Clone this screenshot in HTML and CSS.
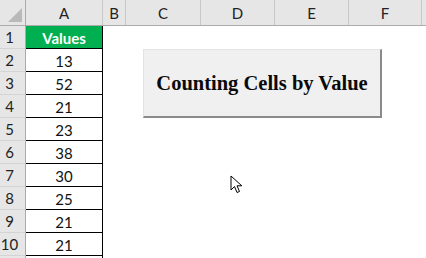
FILE: index.html
```html
<html>
<head>
    <title>Counting Cells by Value</title>
    <link rel="stylesheet" href="styles.css">
</head>
<body>
<div class="sheet">
    <div class="col-heads">
        <div class="corner"><span class="corner-tri"></span></div>
        <div class="col-head a">A</div>
        <div class="col-head b">B</div>
        <div class="col-head c">C</div>
        <div class="col-head d">D</div>
        <div class="col-head e">E</div>
        <div class="col-head f">F</div>
        <div class="col-head g"></div>
    </div>
    <div class="rows">
        <div class="row-head">1</div><div class="cell title">Values</div><div class="rest"></div>
        <div class="row-head">2</div><div class="cell">13</div><div class="rest"></div>
        <div class="row-head">3</div><div class="cell">52</div><div class="rest"></div>
        <div class="row-head">4</div><div class="cell">21</div><div class="rest"></div>
        <div class="row-head">5</div><div class="cell">23</div><div class="rest"></div>
        <div class="row-head">6</div><div class="cell">38</div><div class="rest"></div>
        <div class="row-head">7</div><div class="cell">30</div><div class="rest"></div>
        <div class="row-head">8</div><div class="cell">25</div><div class="rest"></div>
        <div class="row-head">9</div><div class="cell">21</div><div class="rest"></div>
        <div class="row-head">10</div><div class="cell">21</div><div class="rest"></div>
        <div class="row-head"></div><div class="cell"></div><div class="rest"></div>
    </div>

    <button class="macro-btn">Counting Cells by Value</button>

    <svg class="cursor" width="13" height="20" viewBox="0 0 13 20">
        <path d="M1 1 L1 15 L4.5 11.5 L7 17.5 L9.5 16.5 L7 10.8 L11.8 10.8 Z" fill="#fff" stroke="#000" stroke-width="1" stroke-linejoin="miter"/>
    </svg>
</div>
</body>
</html>
```

FILE: styles.css
```css
body {
    margin: 0;
    background: #fff;
    font-family: Lato, "Open Sans", sans-serif;
    overflow: hidden;
}

.sheet {
    position: relative;
    width: 426px;
    height: 258px;
    overflow: hidden;
}

/* column headers */
.col-heads {
    display: grid;
    grid-template-columns: 26px 77px 23px 75px 74px 74px 73px 1fr;
    height: 26px;
    background: #e6e6e6;
    border-bottom: 1px solid #ababab;
    box-sizing: border-box;
}

.corner {
    position: relative;
    border-right: 1px solid #ababab;
}

.corner-tri {
    position: absolute;
    right: 3px;
    bottom: 3px;
    width: 0;
    height: 0;
    border-left: 14px solid transparent;
    border-bottom: 14px solid #b9b9b9;
}

.col-head {
    border-right: 1px solid #c8c8c8;
    font-size: 15px;
    color: #222;
    display: flex;
    align-items: center;
    justify-content: center;
    padding-top: 1px;
}

.col-head.g {
    border-right: none;
}

/* rows */
.rows {
    display: grid;
    grid-template-columns: 26px 77px 1fr;
    grid-auto-rows: 23px;
}

.row-head {
    background: #e6e6e6;
    border-right: 1px solid #ababab;
    border-bottom: 1px solid #d4d4d4;
    font-size: 15px;
    color: #222;
    display: flex;
    align-items: center;
    justify-content: center;
    padding-right: 6px;
}

.cell {
    border-right: 1px solid #000;
    border-bottom: 1px solid #000;
    font-size: 15px;
    color: #111;
    display: flex;
    align-items: center;
    justify-content: center;
    padding-top: 1px;
}

.cell.title {
    background: #00b050;
    color: #fff;
    font-weight: bold;
}

.rest {
    background: #fff;
}

/* floating macro button */
.macro-btn {
    position: absolute;
    left: 143px;
    top: 49px;
    width: 239px;
    height: 69px;
    background: #f0f0f0;
    border: 1px solid #e3e3e3;
    border-right: 2px solid #8a8a8a;
    border-bottom: 2px solid #8a8a8a;
    font-family: "Liberation Serif", serif;
    font-weight: bold;
    font-size: 20.5px;
    color: #0a0a0a;
    padding: 0;
}

.cursor {
    position: absolute;
    left: 230px;
    top: 175px;
}
```
